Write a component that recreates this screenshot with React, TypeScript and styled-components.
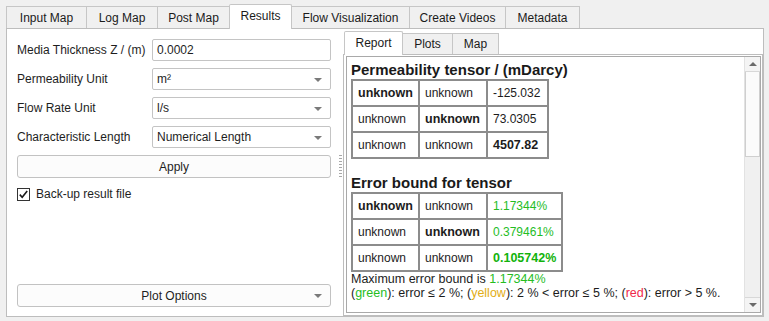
import styled, { createGlobalStyle } from "styled-components";

const GlobalStyle = createGlobalStyle`
  html, body {
    margin: 0;
    padding: 0;
    background: #f0f0f0;
  }
  body {
    font-family: "Liberation Sans", Arial, sans-serif;
    font-size: 12px;
    color: #1e1e1e;
  }
`;

const GREEN = "#25bd1f";
const YELLOW = "#e2ad14";
const RED = "#f0284a";

const mainTabs = [
  { label: "Input Map", width: 81 },
  { label: "Log Map", width: 72 },
  { label: "Post Map", width: 73 },
  { label: "Results", width: 63, active: true },
  { label: "Flow Visualization", width: 119 },
  { label: "Create Videos", width: 97 },
  { label: "Metadata", width: 75 },
];

const reportTabs = [
  { label: "Report", width: 59, active: true },
  { label: "Plots", width: 51 },
  { label: "Map", width: 47 },
];

type Cell = { text: string; bold?: boolean; color?: string };

const tensorRows: Cell[][] = [
  [{ text: "unknown", bold: true }, { text: "unknown" }, { text: "-125.032" }],
  [{ text: "unknown" }, { text: "unknown", bold: true }, { text: "73.0305" }],
  [{ text: "unknown" }, { text: "unknown" }, { text: "4507.82", bold: true }],
];

const errorRows: Cell[][] = [
  [{ text: "unknown", bold: true }, { text: "unknown" }, { text: "1.17344%", color: GREEN }],
  [{ text: "unknown" }, { text: "unknown", bold: true }, { text: "0.379461%", color: GREEN }],
  [{ text: "unknown" }, { text: "unknown" }, { text: "0.105742%", bold: true, color: "#12b30c" }],
];

const Window = styled.div`
  width: 769px;
  height: 321px;
  box-sizing: border-box;
  padding: 4px 5px 4px 6px;
  display: flex;
  flex-direction: column;
  background: #f0f0f0;
  overflow: hidden;
`;

const TabBar = styled.div<{ $height: number; $inset?: number }>`
  display: flex;
  align-items: flex-end;
  height: ${(p) => p.$height}px;
  margin-bottom: -1px;
  padding-left: ${(p) => p.$inset ?? 0}px;
  position: relative;
  z-index: 1;
  flex-shrink: 0;
`;

const Tab = styled.div<{ $width: number; $active?: boolean; $low: number; $high: number }>`
  width: ${(p) => p.$width}px;
  height: ${(p) => (p.$active ? p.$high : p.$low)}px;
  margin-bottom: ${(p) => (p.$active ? 0 : 1)}px;
  margin-right: -1px;
  box-sizing: border-box;
  border: 1px solid #c6c6c6;
  border-bottom: none;
  border-radius: ${(p) => (p.$active ? "2px 2px 0 0" : "0")};
  background: ${(p) => (p.$active ? "#ffffff" : "#f0f0f0")};
  position: relative;
  z-index: ${(p) => (p.$active ? 2 : 1)};
  display: flex;
  align-items: center;
  justify-content: center;
  padding-bottom: ${(p) => (p.$active ? 2 : 0)}px;
  white-space: nowrap;
  font-size: 12px;
  color: #1b1b1b;
`;

const MainPane = styled.div`
  flex: 1;
  display: flex;
  border: 1px solid #bdbdbd;
  background: #ffffff;
  min-height: 0;
`;

const LeftPanel = styled.div`
  width: 330px;
  box-sizing: border-box;
  padding: 10px 6px 9px 10px;
  display: flex;
  flex-direction: column;
  flex-shrink: 0;
`;

const FormRow = styled.div`
  display: grid;
  grid-template-columns: 135px 1fr;
  align-items: center;
  height: 22px;
  margin-bottom: 7px;
`;

const Label = styled.span`
  white-space: nowrap;
  color: #1e1e1e;
`;

const Field = styled.div`
  height: 22px;
  box-sizing: border-box;
  border: 1px solid #c4c4c4;
  border-radius: 2px;
  background: #ffffff;
  display: flex;
  align-items: center;
  padding: 0 4px;
  position: relative;
  color: #1e1e1e;
`;

const Arrow = styled.span`
  position: absolute;
  right: 8px;
  top: 9px;
  width: 0;
  height: 0;
  border-left: 4px solid transparent;
  border-right: 4px solid transparent;
  border-top: 4px solid #7a7a7a;
`;

const Button = styled.div`
  height: 23px;
  box-sizing: border-box;
  border: 1px solid #c2c2c2;
  border-radius: 3px;
  background: #fcfcfc;
  display: flex;
  align-items: center;
  justify-content: center;
  position: relative;
  color: #1e1e1e;
`;

const CheckRow = styled.label`
  display: flex;
  align-items: center;
  gap: 6px;
  margin-top: 9px;
`;

const CheckBox = styled.span`
  width: 13px;
  height: 13px;
  box-sizing: border-box;
  border: 1px solid #333333;
  background: #ffffff;
  display: flex;
  align-items: center;
  justify-content: center;
`;

const Spacer = styled.div`
  flex: 1;
`;

const Splitter = styled.div`
  width: 6px;
  flex-shrink: 0;
  display: flex;
  align-items: center;
  justify-content: center;
`;

const Grip = styled.div`
  width: 3px;
  height: 24px;
  margin-bottom: 12px;
  margin-left: 1px;
  background: repeating-linear-gradient(
    to bottom,
    #a8a8a8 0px,
    #a8a8a8 1px,
    transparent 1px,
    transparent 3px
  );
`;

const RightTabs = styled.div`
  flex: 1;
  padding-top: 2px;
  display: flex;
  flex-direction: column;
  min-width: 0;
`;

const RightPane = styled.div`
  flex: 1;
  border: 1px solid #bdbdbd;
  background: #ffffff;
  padding: 1px 1px 2px 2px;
  display: flex;
  min-height: 0;
`;

const Browser = styled.div`
  flex: 1;
  border: 1px solid #a9a9a9;
  display: flex;
  min-height: 0;
`;

const Report = styled.div`
  flex: 1;
  padding: 4px 4px 0 4px;
  overflow: hidden;
  color: #1c1c1c;
`;

const Heading = styled.div<{ $gap: number }>`
  font-size: 15px;
  font-weight: bold;
  line-height: 18px;
  margin-top: ${(p) => p.$gap}px;
  white-space: nowrap;
  color: #1a1a1a;
`;

const Table = styled.table`
  border: 1px solid #8c8c8c;
  border-spacing: 0;
  table-layout: fixed;
`;

const Td = styled.td<{ $w: number; $bold?: boolean; $color?: string }>`
  width: ${(p) => p.$w}px;
  height: 24px;
  padding: 0 5px;
  border: 1px solid #8c8c8c;
  white-space: nowrap;
  font-size: ${(p) => (p.$bold ? 12.5 : 12)}px;
  font-weight: ${(p) => (p.$bold ? "bold" : "normal")};
  color: ${(p) => p.$color ?? "#1c1c1c"};
  overflow: hidden;
`;

const Note = styled.div`
  line-height: 14px;
  font-size: 12.5px;
  white-space: nowrap;
  &:first-of-type {
    margin-top: 3px;
  }
`;

const Colored = styled.span<{ $color: string }>`
  color: ${(p) => p.$color};
`;

const ScrollBar = styled.div`
  width: 15px;
  flex-shrink: 0;
  display: flex;
  flex-direction: column;
  background: #f0f0f0;
  border-left: 1px solid #e2e2e2;
`;

const ScrollButton = styled.div<{ $down?: boolean }>`
  height: 14px;
  flex-shrink: 0;
  display: flex;
  align-items: center;
  justify-content: center;
  background: #f4f4f4;
  border-bottom: ${(p) => (p.$down ? "none" : "1px solid #d8d8d8")};
  border-top: ${(p) => (p.$down ? "1px solid #d8d8d8" : "none")};
  &::after {
    content: "";
    width: 0;
    height: 0;
    border-left: 4px solid transparent;
    border-right: 4px solid transparent;
    ${(p) => (p.$down ? "border-top: 4px solid #6a6a6a;" : "border-bottom: 4px solid #6a6a6a;")}
  }
`;

const Thumb = styled.div`
  height: 85px;
  flex-shrink: 0;
  box-sizing: border-box;
  background: #fbfbfb;
  border: 1px solid #cfcfcf;
  border-top: none;
`;

const Track = styled.div`
  flex: 1;
`;

const widths = [55, 56, 49];

const DataTable = ({ rows }: { rows: Cell[][] }) => (
  <Table>
    <tbody>
      {rows.map((row, i) => (
        <tr key={i}>
          {row.map((c, j) => (
            <Td key={j} $w={widths[j]} $bold={c.bold} $color={c.color}>
              {c.text}
            </Td>
          ))}
        </tr>
      ))}
    </tbody>
  </Table>
);

const Check = () => (
  <svg width="11" height="11" viewBox="0 0 11 11">
    <path d="M1.8 5.6 L4.2 8.3 L9.2 1.9" fill="none" stroke="#1a1a1a" strokeWidth="1.6" />
  </svg>
);

export default function App() {
  return (
    <>
      <GlobalStyle />
      <Window>
        <TabBar $height={25}>
          {mainTabs.map((t) => (
            <Tab key={t.label} $width={t.width} $active={t.active} $low={22} $high={25}>
              {t.label}
            </Tab>
          ))}
        </TabBar>
        <MainPane>
          <LeftPanel>
            <FormRow>
              <Label>Media Thickness Z / (m)</Label>
              <Field>0.0002</Field>
            </FormRow>
            <FormRow>
              <Label>Permeability Unit</Label>
              <Field>
                m²
                <Arrow />
              </Field>
            </FormRow>
            <FormRow>
              <Label>Flow Rate Unit</Label>
              <Field>
                l/s
                <Arrow />
              </Field>
            </FormRow>
            <FormRow>
              <Label>Characteristic Length</Label>
              <Field>
                Numerical Length
                <Arrow />
              </Field>
            </FormRow>
            <Button>Apply</Button>
            <CheckRow>
              <CheckBox>
                <Check />
              </CheckBox>
              Back-up result file
            </CheckRow>
            <Spacer />
            <Button>
              Plot Options
              <Arrow />
            </Button>
          </LeftPanel>
          <Splitter>
            <Grip />
          </Splitter>
          <RightTabs>
            <TabBar $height={24} $inset={1}>
              {reportTabs.map((t) => (
                <Tab key={t.label} $width={t.width} $active={t.active} $low={21} $high={24}>
                  {t.label}
                </Tab>
              ))}
            </TabBar>
            <RightPane>
              <Browser>
                <Report>
                  <Heading $gap={0}>Permeability tensor / (mDarcy)</Heading>
                  <DataTable rows={tensorRows} />
                  <Heading $gap={15}>Error bound for tensor</Heading>
                  <DataTable rows={errorRows} />
                  <Note>
                    Maximum error bound is <Colored $color={GREEN}>1.17344%</Colored>
                  </Note>
                  <Note>
                    (<Colored $color={GREEN}>green</Colored>): error ≤ 2 %; (
                    <Colored $color={YELLOW}>yellow</Colored>): 2 % &lt; error ≤ 5 %; (
                    <Colored $color={RED}>red</Colored>): error &gt; 5 %.
                  </Note>
                </Report>
                <ScrollBar>
                  <ScrollButton />
                  <Thumb />
                  <Track />
                  <ScrollButton $down />
                </ScrollBar>
              </Browser>
            </RightPane>
          </RightTabs>
        </MainPane>
      </Window>
    </>
  );
}
